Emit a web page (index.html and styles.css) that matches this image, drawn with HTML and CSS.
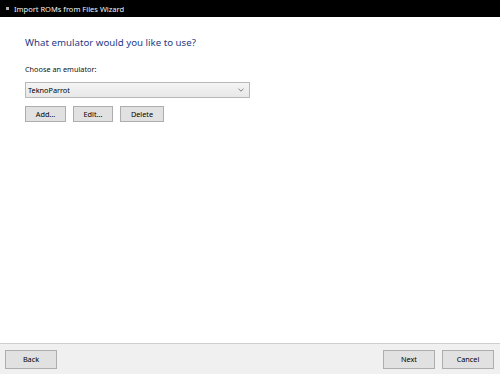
FILE: index.html
```html
<!DOCTYPE html>
<html>
<head>
<meta charset="utf-8">
<title>Import ROMs from Files Wizard</title>
<link rel="stylesheet" href="styles.css">
</head>
<body>
<div class="window">
  <div class="titlebar">
    <span class="app-icon"></span>
    <span class="title-text">Import ROMs from Files Wizard</span>
  </div>
  <div class="content">
    <h1 class="heading">What emulator would you like to use?</h1>
    <div class="label">Choose an emulator:</div>
    <div class="combo">
      <span class="combo-text">TeknoParrot</span>
      <svg class="chevron" width="6" height="4" viewBox="0 0 6 4"><path d="M0.5 0.8 L3 3.2 L5.5 0.8" fill="none" stroke="#707070" stroke-width="0.9"/></svg>
    </div>
    <div class="row">
      <button class="btn btn-add">Add...</button>
      <button class="btn btn-edit">Edit...</button>
      <button class="btn btn-delete">Delete</button>
    </div>
  </div>
  <div class="footer">
    <button class="btn btn-nav">Back</button>
    <div class="footer-right">
      <button class="btn btn-nav">Next</button>
      <button class="btn btn-nav">Cancel</button>
    </div>
  </div>
</div>
</body>
</html>
```
FILE: styles.css
```css
html, body {
  margin: 0;
  padding: 0;
  background: #ffffff;
}
.window {
  width: 500px;
  height: 374px;
  display: flex;
  flex-direction: column;
  font-family: "Noto Sans", "Open Sans", sans-serif;
  color: #000;
}
.titlebar {
  height: 17px;
  flex: none;
  background: #000;
  color: #f2f2f2;
  display: flex;
  align-items: center;
  padding-left: 6px;
  gap: 5px;
  font-size: 7.5px;
}
.app-icon {
  width: 3px;
  height: 3px;
  background: #b0b0b0;
}
.content {
  flex: 1;
  padding: 18px 25px 0 25px;
}
.heading {
  margin: 0;
  font-weight: normal;
  font-size: 9.7px;
  line-height: 15px;
  color: #1f3b86;
}
.label {
  margin-top: 14px;
  font-size: 7.3px;
  line-height: 11px;
  color: #111;
}
.combo {
  margin-top: 7px;
  width: 216px;
  height: 14px;
  border: 1px solid #b8b8b8;
  background: linear-gradient(#f4f4f4, #e8e8e8);
  display: flex;
  align-items: center;
  justify-content: space-between;
  padding: 0 5px 0 2px;
}
.combo-text {
  font-size: 7.3px;
  line-height: 11px;
}
.chevron {
  display: block;
}
.row {
  display: flex;
  gap: 7px;
  margin-top: 8px;
}
.btn {
  font-family: inherit;
  font-size: 7.3px;
  line-height: 11px;
  color: #000;
  background: #e1e1e1;
  border: 1px solid #adadad;
  padding: 0;
  height: 16px;
  margin: 0;
  box-sizing: border-box;
}
.btn-add { width: 41px; }
.btn-edit { width: 40px; }
.btn-delete { width: 44px; }
.footer {
  flex: none;
  height: 31px;
  box-sizing: border-box;
  border-top: 1px solid #cfcfcf;
  background: #f0f0f0;
  display: flex;
  justify-content: space-between;
  align-items: flex-start;
  padding: 6px 6px 0 5px;
}
.footer-right {
  display: flex;
  gap: 7px;
}
.btn-nav {
  width: 52px;
  height: 19px;
}
```
